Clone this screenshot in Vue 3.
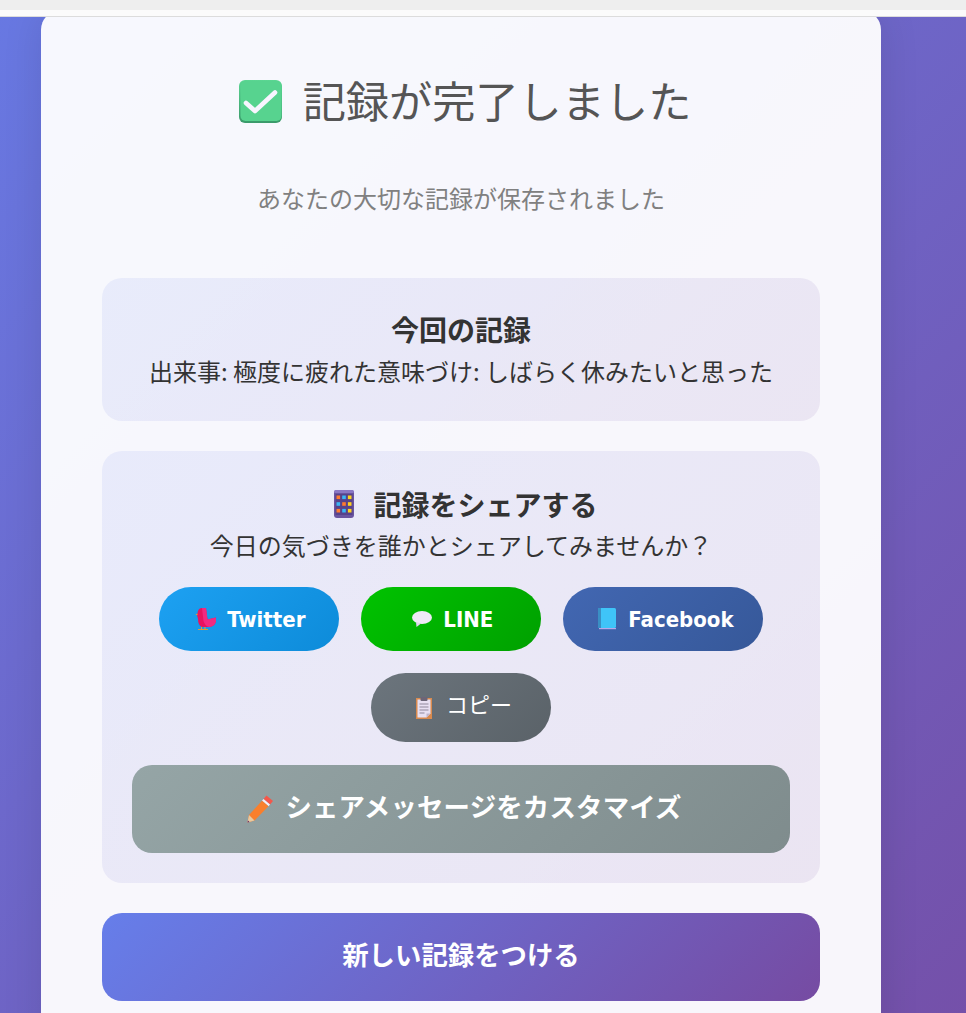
<script setup>
const dots = [
  ['#ff7a2e', '#39b6f5', '#ffd21f'],
  ['#39b6f5', '#ff7a2e', '#ffd21f'],
  ['#ff7a2e', '#39b6f5', '#ffd21f'],
]
</script>

<template>
  <div class="browser-top"></div>
  <div class="page">
    <main class="card">
      <h1 class="title">
        <svg class="check-icon" viewBox="0 0 44 44">
          <defs>
            <linearGradient id="checkEdge" x1="0" y1="0" x2="0" y2="1">
              <stop offset="0" stop-color="#5bd692" />
              <stop offset="1" stop-color="#3a9a6a" />
            </linearGradient>
          </defs>
          <rect x="0" y="0" width="43" height="43" rx="6" fill="url(#checkEdge)" />
          <rect x="1.500" y="1" width="41" height="40" rx="5" fill="#57d38f" />
          <path d="M7 23l9 8 20-18.500" fill="none" stroke="#f8f5ff" stroke-width="4.600" stroke-linecap="round" stroke-linejoin="round" />
        </svg>
        <span>記録が完了しました</span>
      </h1>
      <p class="subtitle">あなたの大切な記録が保存されました</p>

      <section class="summary">
        <h3>今回の記録</h3>
        <p>出来事: 極度に疲れた意味づけ: しばらく休みたいと思った</p>
      </section>

      <section class="share">
        <h3 class="share-title">
          <svg class="phone-icon" viewBox="0 0 20 28">
            <rect x="0" y="0" width="20" height="28" rx="3" fill="#6a549f" />
            <rect x="0" y="0" width="20" height="3" rx="1.500" fill="#8a78c4" />
            <rect x="1.500" y="4" width="17" height="21" fill="#57428a" />
            <template v-for="(row, r) in dots" :key="r">
              <rect v-for="(c, i) in row" :key="i" :x="2.500 + i * 5.700" :y="5.500 + r * 6.700" width="3.600" height="3.600" :fill="c" />
            </template>
          </svg>
          <span>記録をシェアする</span>
        </h3>
        <p class="share-text">今日の気づきを誰かとシェアしてみませんか？</p>

        <div class="share-buttons">
          <button class="pill twitter">
            <svg class="pill-icon" viewBox="0 0 22 22">
              <path d="M3 3q1-3 4-3h4l1.500 11.500L21 9.500v4q-1.500 5-7 5.500H7q-4-1.500-4-8L2 7z" fill="#e8145f" />
              <path d="M7 0h4l1.500 11.500L21 9.500v4q-1.500 5-7 5.500q-4-1-5.500-6z" fill="#f22a80" />
              <path d="M2.500 5.500L.5 6.500l2 .8z" fill="#f59a23" />
              <path d="M6.500 19v2.500M10 19v2.500M3 21.600h10" stroke="#f59a23" stroke-width="1" fill="none" />
            </svg>
            <span>Twitter</span>
          </button>
          <button class="pill line">
            <svg class="pill-icon" viewBox="0 0 22 22">
              <ellipse cx="11" cy="9.500" rx="10" ry="6.500" fill="#efe9f6" />
              <path d="M5 14l.5 5 4.500-3.500z" fill="#e0d6ec" />
            </svg>
            <span>LINE</span>
          </button>
          <button class="pill facebook">
            <svg class="pill-icon" viewBox="0 0 22 22">
              <rect x="2" y="0" width="18" height="20" rx="1.500" fill="#3fc4f8" />
              <rect x="2" y="0" width="3" height="20" fill="#3a8fc4" />
              <rect x="3" y="20" width="17" height="1.200" fill="#b9a8ea" />
            </svg>
            <span>Facebook</span>
          </button>
          <button class="pill copy">
            <svg class="pill-icon" viewBox="0 0 22 22">
              <rect x="2" y="1" width="16" height="21" fill="#d98a4e" />
              <path d="M3.500 2.500h13v14l-4 4h-9z" fill="#e8e0f2" />
              <path d="M12.500 20.500l4-4h-4z" fill="#bfb6cc" />
              <rect x="6.500" y="0" width="7" height="4" rx="1" fill="#6c6577" />
              <path d="M5.500 7h9M5.500 10h9M5.500 13h9M5.500 16h5" stroke="#8f879c" stroke-width="1.100" />
            </svg>
            <span>コピー</span>
          </button>
        </div>

        <button class="customize">
          <svg class="pencil-icon" viewBox="0 0 28 28">
            <path d="M20.500 0.500l6.500 5.500-3 3.500-6.500-5.500z" fill="#f4574a" />
            <path d="M17.500 4l6.500 5.500-1.500 1.800-6.500-5.500z" fill="#f3eef8" />
            <path d="M16 5.800l6.500 5.500L8.500 25.500l-7 2 1.500-7.500z" fill="#f97f2d" />
            <path d="M3 20l5.500 5.500-7 2z" fill="#e8c9a0" />
            <path d="M2 25.500l1.500 1.500-2 .5z" fill="#5a2a6e" />
          </svg>
          <span>シェアメッセージをカスタマイズ</span>
        </button>
      </section>

      <button class="new-record">新しい記録をつける</button>
    </main>
  </div>
</template>

<style>
html, body {
  margin: 0;
  height: 1013px;
  overflow: hidden;
  background: #fff;
}
</style>

<style scoped>
.browser-top {
  height: 10px;
  background: #eeeeee;
  border-bottom: 6px solid #fbfbfb;
  box-shadow: 0 1px 0 #dcdcdc;
  position: relative;
  z-index: 1;
}

/* page is scrolled in the shot, so the gradient starts well above the frame */
.page {
  height: 1090px;
  margin-top: 1px;
  padding: 0 85px 0 41px;
  box-sizing: border-box;
  overflow: hidden;
  background: linear-gradient(135deg, #667eea 0%, #764ba2 100%) 0 -280px / 100% 1530px no-repeat;
  font-family: "Noto Sans CJK JP", "Noto Sans", sans-serif;
}

.card {
  width: 840px;
  height: 1120px;
  margin-top: -7px;
  box-sizing: border-box;
  padding: 62px 61px 0;
  background: rgba(255, 255, 255, 0.95);
  border-radius: 20px;
  box-shadow: 0 0 40px rgba(0, 0, 0, 0.1);
}

.title {
  display: flex;
  align-items: center;
  justify-content: center;
  gap: 20px;
  margin: 0;
  padding-left: 8px;
  height: 60px;
  font-size: 43.200px;
  line-height: 60px;
  font-weight: 400;
  color: #555;
}

.title span {
  margin-bottom: 6px;
}

.check-icon {
  width: 44px;
  height: 44px;
}

.subtitle {
  margin: 48px 0 0;
  font-size: 24px;
  line-height: 36px;
  text-align: center;
  color: #808080;
}

.summary,
.share {
  background: linear-gradient(135deg, rgba(102, 126, 234, 0.1), rgba(118, 75, 162, 0.1));
  border-radius: 20px;
  padding: 30px;
  text-align: center;
  color: #333;
}

.summary {
  margin-top: 62px;
}

.summary h3 {
  margin: 0;
  font-size: 28px;
  line-height: 42px;
  font-weight: 700;
}

.summary p {
  margin: 0;
  font-size: 24px;
  line-height: 41px;
  white-space: nowrap;
}

.share {
  margin-top: 30px;
}

.share-title {
  display: flex;
  align-items: center;
  justify-content: center;
  gap: 19px;
  margin: 0;
  padding-left: 10px;
  height: 46px;
  font-size: 28px;
  line-height: 46px;
  font-weight: 700;
}

.phone-icon {
  width: 20px;
  height: 28px;
}

.share-text {
  margin: -1px 0 0;
  font-size: 24px;
  line-height: 38px;
}

.share-buttons {
  display: flex;
  flex-wrap: wrap;
  justify-content: center;
  gap: 22px;
  margin-top: 23px;
}

.pill {
  display: flex;
  align-items: center;
  justify-content: center;
  gap: 10px;
  min-width: 180px;
  height: 64px;
  padding: 0 31px 0 33px;
  border: none;
  border-radius: 35px;
  color: #fff;
  font-family: "DejaVu Sans Condensed", "DejaVu Sans", "Noto Sans CJK JP", sans-serif;
  font-stretch: condensed;
  font-size: 22px;
  font-weight: 700;
}

.pill-icon {
  width: 22px;
  height: 22px;
}

.twitter {
  background: linear-gradient(135deg, #1da1f2, #0d8bd9);
}

.line {
  background: linear-gradient(135deg, #00c300, #00a000);
}

.facebook {
  padding: 0 29px 0 33px;
  background: linear-gradient(135deg, #4267b2, #365899);
}

.copy {
  height: 69px;
  padding: 0 30px 0 34px;
  background: linear-gradient(135deg, #6c757d, #5a6268);
  font-family: "Noto Sans CJK JP", sans-serif;
  font-size: 22px;
  font-weight: 400;
}

.copy span {
  margin-bottom: 9px;
}

.customize {
  display: flex;
  align-items: center;
  justify-content: center;
  gap: 11px;
  width: 100%;
  height: 88px;
  margin-top: 23px;
  padding: 0 0 0 6px;
  border: none;
  border-radius: 20px;
  background: linear-gradient(135deg, #95a5a6, #7f8c8d);
  color: #fff;
  font-family: inherit;
  font-size: 26.400px;
  letter-spacing: 0.200px;
  font-weight: 700;
}

.customize span {
  margin-bottom: 8px;
}

.pencil-icon {
  width: 28px;
  height: 28px;
}

.new-record {
  display: block;
  width: 100%;
  height: 88px;
  margin-top: 30px;
  padding-bottom: 8px;
  border: none;
  border-radius: 20px;
  background: linear-gradient(135deg, #667eea, #764ba2);
  color: #fff;
  font-family: inherit;
  font-size: 26.400px;
  font-weight: 700;
}
</style>
